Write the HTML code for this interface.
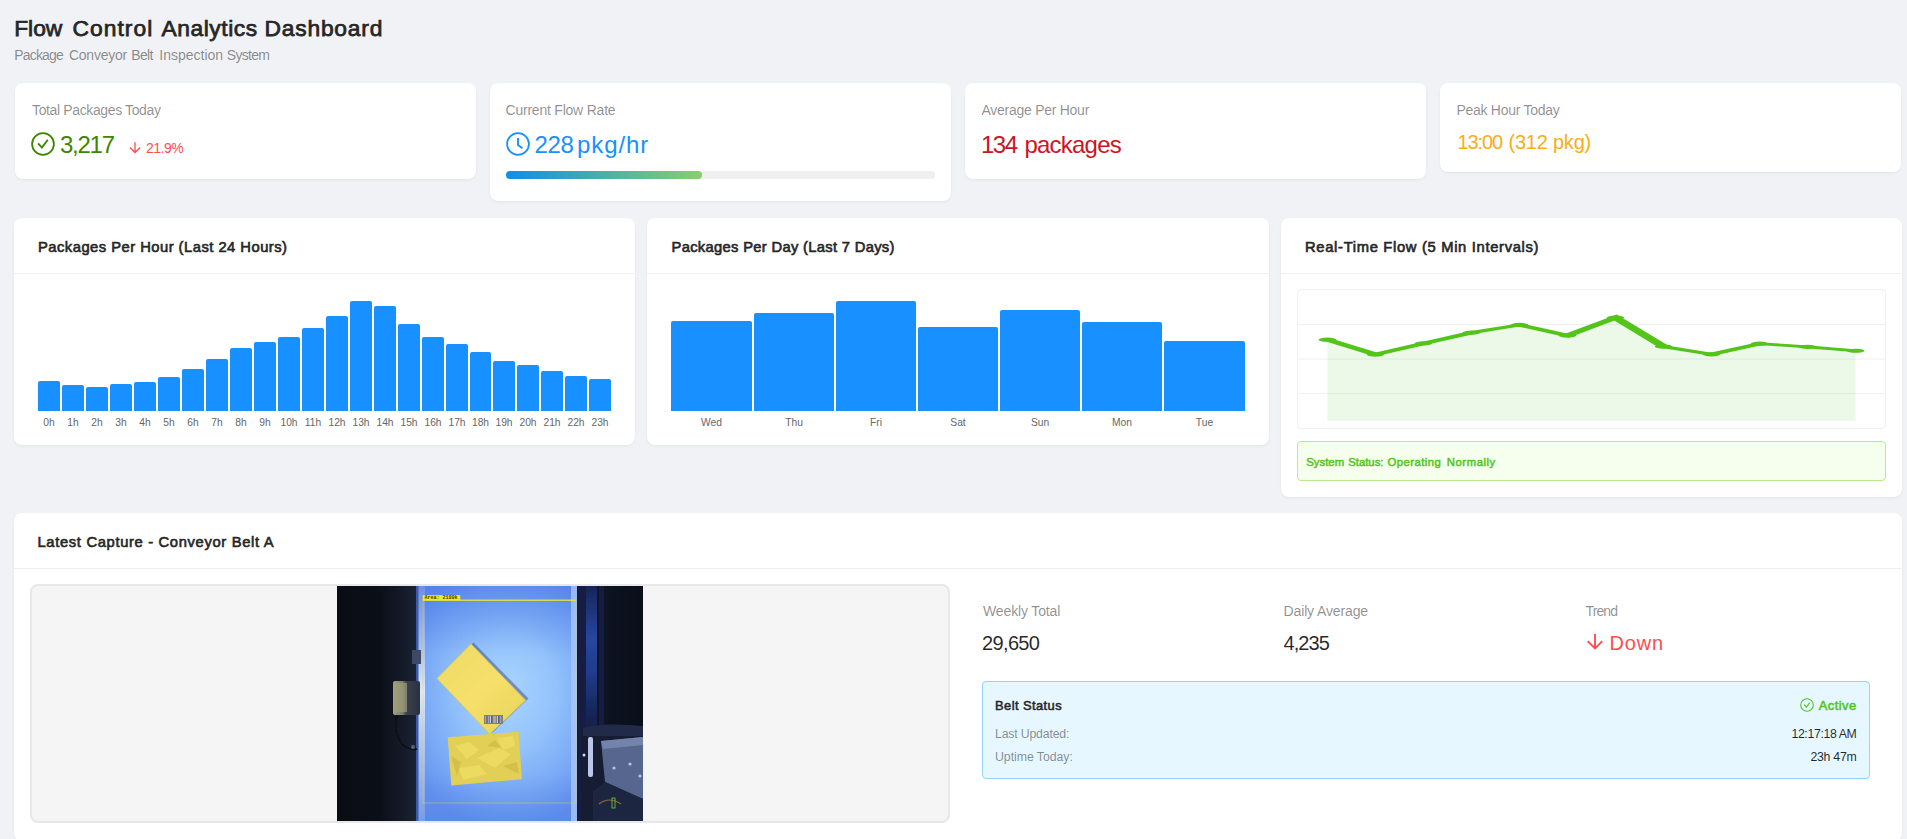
<!DOCTYPE html>
<html lang="en"><head><meta charset="utf-8"><title>Flow Control Analytics Dashboard</title>
<style>
html,body{margin:0;padding:0}
body{width:1907px;height:839px;overflow:hidden;background:#f0f2f5;position:relative;font-family:"Liberation Sans",sans-serif;}
.b{position:absolute;box-sizing:content-box}
.t{position:absolute;white-space:nowrap}
</style></head><body>
<span class="t" id="title0" style="top:12.00px;font-size:22.8px;line-height:32px;color:#262626;-webkit-text-stroke:0.75px;left:14.20px;">Flow</span>
<span class="t" id="title1" style="top:12.00px;font-size:22.8px;line-height:32px;color:#262626;-webkit-text-stroke:0.75px;letter-spacing:1.067px;left:72.40px;">Control</span>
<span class="t" id="title2" style="top:12.00px;font-size:22.8px;line-height:32px;color:#262626;-webkit-text-stroke:0.75px;letter-spacing:0.537px;left:161.60px;">Analytics</span>
<span class="t" id="title3" style="top:12.00px;font-size:22.8px;line-height:32px;color:#262626;-webkit-text-stroke:0.75px;letter-spacing:0.775px;left:264.60px;">Dashboard</span>
<span class="t" id="sub0" style="top:45.00px;font-size:14.0px;line-height:20px;color:rgba(0,0,0,.45);letter-spacing:-0.800px;left:14.20px;">Package</span>
<span class="t" id="sub1" style="top:45.00px;font-size:14.0px;line-height:20px;color:rgba(0,0,0,.45);letter-spacing:-0.229px;left:68.90px;">Conveyor</span>
<span class="t" id="sub2" style="top:45.00px;font-size:14.0px;line-height:20px;color:rgba(0,0,0,.45);letter-spacing:-0.633px;left:131.20px;">Belt</span>
<span class="t" id="sub3" style="top:45.00px;font-size:14.0px;line-height:20px;color:rgba(0,0,0,.45);left:159.30px;">Inspection</span>
<span class="t" id="sub4" style="top:45.00px;font-size:14.0px;line-height:20px;color:rgba(0,0,0,.45);letter-spacing:-0.700px;left:226.80px;">System</span>
<div class="b" style="left:15px;top:83px;width:461px;height:96px;background:#fff;border-radius:8px;box-shadow:0 1px 2px 0 rgba(0,0,0,.03),0 1px 6px -1px rgba(0,0,0,.02),0 2px 4px 0 rgba(0,0,0,.02);"></div>
<div class="b" style="left:490px;top:83px;width:461px;height:118px;background:#fff;border-radius:8px;box-shadow:0 1px 2px 0 rgba(0,0,0,.03),0 1px 6px -1px rgba(0,0,0,.02),0 2px 4px 0 rgba(0,0,0,.02);"></div>
<div class="b" style="left:965px;top:83px;width:461px;height:96px;background:#fff;border-radius:8px;box-shadow:0 1px 2px 0 rgba(0,0,0,.03),0 1px 6px -1px rgba(0,0,0,.02),0 2px 4px 0 rgba(0,0,0,.02);"></div>
<div class="b" style="left:1440px;top:83px;width:461px;height:89px;background:#fff;border-radius:8px;box-shadow:0 1px 2px 0 rgba(0,0,0,.03),0 1px 6px -1px rgba(0,0,0,.02),0 2px 4px 0 rgba(0,0,0,.02);"></div>
<span class="t" id="s1t" style="top:100.00px;font-size:14.0px;line-height:20px;color:rgba(0,0,0,.45);letter-spacing:-0.368px;left:32.00px;">Total Packages Today</span>
<span class="t" id="s1v" style="top:128.00px;font-size:24.0px;line-height:34px;color:#3f8600;letter-spacing:-1.250px;left:60.00px;">3,217</span>
<span class="t" id="s1p" style="top:138.00px;font-size:14.0px;line-height:20px;color:#ff4d4f;letter-spacing:-0.500px;left:146.00px;">21.9%</span>
<span class="t" id="s2t" style="top:100.00px;font-size:14.0px;line-height:20px;color:rgba(0,0,0,.45);letter-spacing:-0.219px;left:505.50px;">Current Flow Rate</span>
<span class="t" id="s2v" style="top:128.00px;font-size:24.0px;line-height:34px;color:#1890ff;letter-spacing:-0.400px;left:534.50px;">228</span>
<span class="t" id="s2u" style="top:128.00px;font-size:24.0px;line-height:34px;color:#1890ff;letter-spacing:0.900px;left:577.00px;">pkg/hr</span>
<span class="t" id="s3t" style="top:100.00px;font-size:14.0px;line-height:20px;color:rgba(0,0,0,.45);letter-spacing:-0.267px;left:981.50px;">Average Per Hour</span>
<span class="t" id="s3v" style="top:128.00px;font-size:24.0px;line-height:34px;color:#cf1322;letter-spacing:-1.500px;left:981.00px;">134</span>
<span class="t" id="s3u" style="top:128.00px;font-size:24.0px;line-height:34px;color:#cf1322;letter-spacing:-0.786px;left:1024.50px;">packages</span>
<span class="t" id="s4t" style="top:100.00px;font-size:14.0px;line-height:20px;color:rgba(0,0,0,.45);letter-spacing:-0.286px;left:1456.50px;">Peak Hour Today</span>
<span class="t" id="s4v" style="top:128.00px;font-size:20.0px;line-height:28px;color:#faad14;letter-spacing:-1.150px;left:1457.60px;">13:00</span>
<span class="t" id="s4w" style="top:128.00px;font-size:20.0px;line-height:28px;color:#faad14;letter-spacing:-0.225px;left:1508.50px;">(312 pkg)</span>
<svg class="b" style="left:31px;top:132px" width="24" height="24" viewBox="0 0 24 24" fill="none" stroke="#3f8600" stroke-width="1.8"><circle cx="12" cy="12" r="10.9"/><path d="M7.1 11.3L10.9 15.6L16.8 7.8" stroke-width="1.9"/></svg>
<svg class="b" style="left:128.3px;top:141.1px" width="14" height="14" viewBox="0 0 20 20" fill="none" stroke="#ff4d4f" stroke-width="1.9"><path d="M10 1.9V17M2.7 9.2L10 16.5L17.3 9.2"/></svg>
<svg class="b" style="left:506px;top:132px" width="24" height="24" viewBox="0 0 24 24" fill="none" stroke="#1890ff" stroke-width="1.8"><circle cx="12" cy="12" r="10.9"/><path d="M12 6V13.1L16.5 16.2" stroke-width="1.9"/></svg>
<div class="b" style="left:506px;top:171px;width:429px;height:8px;background:#f0f0f0;border-radius:4px;"><div style="width:196px;height:8px;border-radius:4px;background:linear-gradient(90deg,#108ee9,#87d068)"></div></div>
<div class="b" style="left:14px;top:218px;width:621px;height:227px;background:#fff;border-radius:8px;box-shadow:0 1px 2px 0 rgba(0,0,0,.03),0 1px 6px -1px rgba(0,0,0,.02),0 2px 4px 0 rgba(0,0,0,.02);"></div>
<div class="b" style="left:647px;top:218px;width:622px;height:227px;background:#fff;border-radius:8px;box-shadow:0 1px 2px 0 rgba(0,0,0,.03),0 1px 6px -1px rgba(0,0,0,.02),0 2px 4px 0 rgba(0,0,0,.02);"></div>
<div class="b" style="left:1281px;top:218px;width:621px;height:279px;background:#fff;border-radius:8px;box-shadow:0 1px 2px 0 rgba(0,0,0,.03),0 1px 6px -1px rgba(0,0,0,.02),0 2px 4px 0 rgba(0,0,0,.02);"></div>
<div class="b" style="left:14px;top:273px;width:621px;height:1px;background:#f0f0f0;"></div>
<div class="b" style="left:647px;top:273px;width:622px;height:1px;background:#f0f0f0;"></div>
<div class="b" style="left:1281px;top:273px;width:621px;height:1px;background:#f0f0f0;"></div>
<span class="t" id="c1" style="top:237.00px;font-size:14.74px;line-height:21px;color:#262626;-webkit-text-stroke:0.62px;letter-spacing:0.487px;left:38.00px;">Packages Per Hour (Last 24 Hours)</span>
<span class="t" id="c2" style="top:237.00px;font-size:14.74px;line-height:21px;color:#262626;-webkit-text-stroke:0.62px;letter-spacing:0.317px;left:671.50px;">Packages Per Day (Last 7 Days)</span>
<span class="t" id="c3" style="top:237.00px;font-size:14.74px;line-height:21px;color:#262626;-webkit-text-stroke:0.62px;letter-spacing:0.684px;left:1305.00px;">Real-Time Flow (5 Min Intervals)</span>
<div class="b" style="left:38px;top:381px;width:22px;height:30px;background:#1890ff;border-radius:2px 2px 0 0;"></div>
<span class="t" id="h0" style="top:416.00px;font-size:10.25px;line-height:14px;color:#666;left:49.00px;transform:translateX(-50%);">0h</span>
<div class="b" style="left:62px;top:385px;width:22px;height:26px;background:#1890ff;border-radius:2px 2px 0 0;"></div>
<span class="t" id="h1" style="top:416.00px;font-size:10.25px;line-height:14px;color:#666;left:73.00px;transform:translateX(-50%);">1h</span>
<div class="b" style="left:86px;top:387px;width:22px;height:24px;background:#1890ff;border-radius:2px 2px 0 0;"></div>
<span class="t" id="h2" style="top:416.00px;font-size:10.25px;line-height:14px;color:#666;left:97.00px;transform:translateX(-50%);">2h</span>
<div class="b" style="left:110px;top:384px;width:22px;height:27px;background:#1890ff;border-radius:2px 2px 0 0;"></div>
<span class="t" id="h3" style="top:416.00px;font-size:10.25px;line-height:14px;color:#666;left:121.00px;transform:translateX(-50%);">3h</span>
<div class="b" style="left:134px;top:382px;width:22px;height:29px;background:#1890ff;border-radius:2px 2px 0 0;"></div>
<span class="t" id="h4" style="top:416.00px;font-size:10.25px;line-height:14px;color:#666;left:145.00px;transform:translateX(-50%);">4h</span>
<div class="b" style="left:158px;top:377px;width:22px;height:34px;background:#1890ff;border-radius:2px 2px 0 0;"></div>
<span class="t" id="h5" style="top:416.00px;font-size:10.25px;line-height:14px;color:#666;left:169.00px;transform:translateX(-50%);">5h</span>
<div class="b" style="left:182px;top:369px;width:22px;height:42px;background:#1890ff;border-radius:2px 2px 0 0;"></div>
<span class="t" id="h6" style="top:416.00px;font-size:10.25px;line-height:14px;color:#666;left:193.00px;transform:translateX(-50%);">6h</span>
<div class="b" style="left:206px;top:359px;width:22px;height:52px;background:#1890ff;border-radius:2px 2px 0 0;"></div>
<span class="t" id="h7" style="top:416.00px;font-size:10.25px;line-height:14px;color:#666;left:217.00px;transform:translateX(-50%);">7h</span>
<div class="b" style="left:230px;top:348px;width:22px;height:63px;background:#1890ff;border-radius:2px 2px 0 0;"></div>
<span class="t" id="h8" style="top:416.00px;font-size:10.25px;line-height:14px;color:#666;left:241.00px;transform:translateX(-50%);">8h</span>
<div class="b" style="left:254px;top:342px;width:22px;height:69px;background:#1890ff;border-radius:2px 2px 0 0;"></div>
<span class="t" id="h9" style="top:416.00px;font-size:10.25px;line-height:14px;color:#666;left:265.00px;transform:translateX(-50%);">9h</span>
<div class="b" style="left:278px;top:337px;width:22px;height:74px;background:#1890ff;border-radius:2px 2px 0 0;"></div>
<span class="t" id="h10" style="top:416.00px;font-size:10.25px;line-height:14px;color:#666;left:289.00px;transform:translateX(-50%);">10h</span>
<div class="b" style="left:302px;top:328px;width:22px;height:83px;background:#1890ff;border-radius:2px 2px 0 0;"></div>
<span class="t" id="h11" style="top:416.00px;font-size:10.25px;line-height:14px;color:#666;left:313.00px;transform:translateX(-50%);">11h</span>
<div class="b" style="left:326px;top:316px;width:22px;height:95px;background:#1890ff;border-radius:2px 2px 0 0;"></div>
<span class="t" id="h12" style="top:416.00px;font-size:10.25px;line-height:14px;color:#666;left:337.00px;transform:translateX(-50%);">12h</span>
<div class="b" style="left:350px;top:301px;width:22px;height:110px;background:#1890ff;border-radius:2px 2px 0 0;"></div>
<span class="t" id="h13" style="top:416.00px;font-size:10.25px;line-height:14px;color:#666;left:361.00px;transform:translateX(-50%);">13h</span>
<div class="b" style="left:374px;top:306px;width:22px;height:105px;background:#1890ff;border-radius:2px 2px 0 0;"></div>
<span class="t" id="h14" style="top:416.00px;font-size:10.25px;line-height:14px;color:#666;left:385.00px;transform:translateX(-50%);">14h</span>
<div class="b" style="left:398px;top:324px;width:22px;height:87px;background:#1890ff;border-radius:2px 2px 0 0;"></div>
<span class="t" id="h15" style="top:416.00px;font-size:10.25px;line-height:14px;color:#666;left:409.00px;transform:translateX(-50%);">15h</span>
<div class="b" style="left:422px;top:337px;width:22px;height:74px;background:#1890ff;border-radius:2px 2px 0 0;"></div>
<span class="t" id="h16" style="top:416.00px;font-size:10.25px;line-height:14px;color:#666;left:433.00px;transform:translateX(-50%);">16h</span>
<div class="b" style="left:446px;top:344px;width:22px;height:67px;background:#1890ff;border-radius:2px 2px 0 0;"></div>
<span class="t" id="h17" style="top:416.00px;font-size:10.25px;line-height:14px;color:#666;left:457.00px;transform:translateX(-50%);">17h</span>
<div class="b" style="left:470px;top:352px;width:21px;height:59px;background:#1890ff;border-radius:2px 2px 0 0;"></div>
<span class="t" id="h18" style="top:416.00px;font-size:10.25px;line-height:14px;color:#666;left:480.50px;transform:translateX(-50%);">18h</span>
<div class="b" style="left:493px;top:361px;width:22px;height:50px;background:#1890ff;border-radius:2px 2px 0 0;"></div>
<span class="t" id="h19" style="top:416.00px;font-size:10.25px;line-height:14px;color:#666;left:504.00px;transform:translateX(-50%);">19h</span>
<div class="b" style="left:517px;top:365px;width:22px;height:46px;background:#1890ff;border-radius:2px 2px 0 0;"></div>
<span class="t" id="h20" style="top:416.00px;font-size:10.25px;line-height:14px;color:#666;left:528.00px;transform:translateX(-50%);">20h</span>
<div class="b" style="left:541px;top:371px;width:22px;height:40px;background:#1890ff;border-radius:2px 2px 0 0;"></div>
<span class="t" id="h21" style="top:416.00px;font-size:10.25px;line-height:14px;color:#666;left:552.00px;transform:translateX(-50%);">21h</span>
<div class="b" style="left:565px;top:376px;width:22px;height:35px;background:#1890ff;border-radius:2px 2px 0 0;"></div>
<span class="t" id="h22" style="top:416.00px;font-size:10.25px;line-height:14px;color:#666;left:576.00px;transform:translateX(-50%);">22h</span>
<div class="b" style="left:589px;top:379px;width:22px;height:32px;background:#1890ff;border-radius:2px 2px 0 0;"></div>
<span class="t" id="h23" style="top:416.00px;font-size:10.25px;line-height:14px;color:#666;left:600.00px;transform:translateX(-50%);">23h</span>
<div class="b" style="left:671px;top:321px;width:81px;height:90px;background:#1890ff;border-radius:2px 2px 0 0;"></div>
<span class="t" id="d0" style="top:416.00px;font-size:10.25px;line-height:14px;color:#666;left:711.50px;transform:translateX(-50%);">Wed</span>
<div class="b" style="left:754px;top:313px;width:80px;height:98px;background:#1890ff;border-radius:2px 2px 0 0;"></div>
<span class="t" id="d1" style="top:416.00px;font-size:10.25px;line-height:14px;color:#666;left:794.00px;transform:translateX(-50%);">Thu</span>
<div class="b" style="left:836px;top:301px;width:80px;height:110px;background:#1890ff;border-radius:2px 2px 0 0;"></div>
<span class="t" id="d2" style="top:416.00px;font-size:10.25px;line-height:14px;color:#666;left:876.00px;transform:translateX(-50%);">Fri</span>
<div class="b" style="left:918px;top:327px;width:80px;height:84px;background:#1890ff;border-radius:2px 2px 0 0;"></div>
<span class="t" id="d3" style="top:416.00px;font-size:10.25px;line-height:14px;color:#666;left:958.00px;transform:translateX(-50%);">Sat</span>
<div class="b" style="left:1000px;top:310px;width:80px;height:101px;background:#1890ff;border-radius:2px 2px 0 0;"></div>
<span class="t" id="d4" style="top:416.00px;font-size:10.25px;line-height:14px;color:#666;left:1040.00px;transform:translateX(-50%);">Sun</span>
<div class="b" style="left:1082px;top:322px;width:80px;height:89px;background:#1890ff;border-radius:2px 2px 0 0;"></div>
<span class="t" id="d5" style="top:416.00px;font-size:10.25px;line-height:14px;color:#666;left:1122.00px;transform:translateX(-50%);">Mon</span>
<div class="b" style="left:1164px;top:341px;width:81px;height:70px;background:#1890ff;border-radius:2px 2px 0 0;"></div>
<span class="t" id="d6" style="top:416.00px;font-size:10.25px;line-height:14px;color:#666;left:1204.50px;transform:translateX(-50%);">Tue</span>
<div class="b" style="left:1297px;top:289px;width:587px;height:138px;border:1px solid #f0f0f0;border-radius:4px;overflow:hidden;"><svg width="587" height="138" viewBox="0 0 100 100" preserveAspectRatio="none" style="display:block">
<line x1="0" y1="25" x2="100" y2="25" stroke="#f0f0f0" stroke-width="1" vector-effect="non-scaling-stroke"/>
<line x1="0" y1="50" x2="100" y2="50" stroke="#f0f0f0" stroke-width="1" vector-effect="non-scaling-stroke"/>
<line x1="0" y1="75" x2="100" y2="75" stroke="#f0f0f0" stroke-width="1" vector-effect="non-scaling-stroke"/>
<polygon points="5,95 5.00,36.00 13.18,46.70 21.36,38.70 29.55,30.90 37.73,25.30 45.91,33.00 54.09,20.00 62.27,41.00 70.45,46.60 78.64,38.90 86.82,41.20 95.00,44.00 95,95" fill="rgba(82,196,26,0.1)"/>
<polyline points="5.00,36.00 13.18,46.70 21.36,38.70 29.55,30.90 37.73,25.30 45.91,33.00 54.09,20.00 62.27,41.00 70.45,46.60 78.64,38.90 86.82,41.20 95.00,44.00" fill="none" stroke="#52c41a" stroke-width="2"/>
<circle cx="5.00" cy="36.00" r="1.5" fill="#52c41a"/><circle cx="13.18" cy="46.70" r="1.5" fill="#52c41a"/><circle cx="21.36" cy="38.70" r="1.5" fill="#52c41a"/><circle cx="29.55" cy="30.90" r="1.5" fill="#52c41a"/><circle cx="37.73" cy="25.30" r="1.5" fill="#52c41a"/><circle cx="45.91" cy="33.00" r="1.5" fill="#52c41a"/><circle cx="54.09" cy="20.00" r="1.5" fill="#52c41a"/><circle cx="62.27" cy="41.00" r="1.5" fill="#52c41a"/><circle cx="70.45" cy="46.60" r="1.5" fill="#52c41a"/><circle cx="78.64" cy="38.90" r="1.5" fill="#52c41a"/><circle cx="86.82" cy="41.20" r="1.5" fill="#52c41a"/><circle cx="95.00" cy="44.00" r="1.5" fill="#52c41a"/></svg></div>
<div class="b" style="left:1297px;top:441px;width:587px;height:38px;border:1px solid #b7eb8f;border-radius:4px;background:#f6ffed;"></div>
<span class="t" id="sys0" style="top:454.00px;font-size:11.33px;line-height:16px;color:#52c41a;-webkit-text-stroke:0.48px;left:1306.30px;">System</span>
<span class="t" id="sys1" style="top:454.00px;font-size:11.33px;line-height:16px;color:#52c41a;-webkit-text-stroke:0.48px;left:1348.20px;">Status:</span>
<span class="t" id="sys2" style="top:454.00px;font-size:11.33px;line-height:16px;color:#52c41a;-webkit-text-stroke:0.48px;letter-spacing:0.438px;left:1387.60px;">Operating</span>
<span class="t" id="sys3" style="top:454.00px;font-size:11.33px;line-height:16px;color:#52c41a;-webkit-text-stroke:0.48px;letter-spacing:0.543px;left:1446.80px;">Normally</span>
<div class="b" style="left:14px;top:513px;width:1888px;height:328px;background:#fff;border-radius:8px;box-shadow:0 1px 2px 0 rgba(0,0,0,.03),0 1px 6px -1px rgba(0,0,0,.02),0 2px 4px 0 rgba(0,0,0,.02);"></div>
<div class="b" style="left:14px;top:568px;width:1888px;height:1px;background:#f0f0f0;"></div>
<span class="t" id="c4" style="top:532.00px;font-size:14.74px;line-height:21px;color:#262626;-webkit-text-stroke:0.62px;letter-spacing:0.665px;left:37.50px;">Latest Capture - Conveyor Belt A</span>
<div class="b" style="left:30px;top:584px;width:916px;height:235px;border:2px solid #e8e8e8;border-radius:8px;background:#f5f5f5;"></div>
<svg class="b" style="left:337px;top:586px" width="306" height="235" viewBox="0 0 306 235">
<defs>
<linearGradient id="cbg" x1="0" x2="1" y1="0" y2="0"><stop offset="0" stop-color="#090c13"/><stop offset=".14" stop-color="#0b0f18"/><stop offset=".22" stop-color="#151b29"/><stop offset=".27" stop-color="#1d2538"/><stop offset=".79" stop-color="#131a2e"/><stop offset=".9" stop-color="#0d1220"/><stop offset="1" stop-color="#0a0e19"/></linearGradient>
<radialGradient id="belt" cx="170" cy="105" r="140" gradientUnits="userSpaceOnUse" gradientTransform="translate(170 105) scale(.8 1) translate(-170 -105)"><stop offset="0" stop-color="#a8d4ff"/><stop offset=".4" stop-color="#95c4fc"/><stop offset=".75" stop-color="#7aa9f6"/><stop offset="1" stop-color="#6392ef"/></radialGradient>
<linearGradient id="beltv" x1="0" x2="0" y1="0" y2="1"><stop offset="0" stop-color="#4272e4" stop-opacity=".5"/><stop offset=".3" stop-color="#4272e4" stop-opacity="0"/><stop offset=".8" stop-color="#4a78e0" stop-opacity="0"/><stop offset="1" stop-color="#4a78e0" stop-opacity=".35"/></linearGradient>
<linearGradient id="ledge" x1="0" x2="0" y1="0" y2="1"><stop offset="0" stop-color="#6f93e0"/><stop offset=".3" stop-color="#b9cdf5"/><stop offset=".45" stop-color="#eef3ff"/><stop offset=".6" stop-color="#c9d9f8"/><stop offset="1" stop-color="#7c9fe6"/></linearGradient>
<linearGradient id="streak" x1="0" x2="0" y1="0" y2="1"><stop offset="0" stop-color="#16245a"/><stop offset=".35" stop-color="#2747a0"/><stop offset=".6" stop-color="#1f3a88"/><stop offset="1" stop-color="#101a3c"/></linearGradient>
<linearGradient id="y1" x1="0" x2="1" y1="0" y2="1"><stop offset="0" stop-color="#e9dc62"/><stop offset=".5" stop-color="#f7df6c"/><stop offset="1" stop-color="#e6d458"/></linearGradient>
<linearGradient id="sens" x1="0" x2="1" y1="0" y2="0"><stop offset="0" stop-color="#a3a37c"/><stop offset=".35" stop-color="#7d7f68"/><stop offset=".5" stop-color="#3a404c"/><stop offset="1" stop-color="#2a3140"/></linearGradient>
<filter id="cbl" x="-5%" y="-5%" width="110%" height="110%"><feGaussianBlur stdDeviation=".7"/></filter>
<clipPath id="cclip"><rect width="306" height="235"/></clipPath>
</defs>
<g clip-path="url(#cclip)">
<rect width="306" height="235" fill="url(#cbg)"/>
<g filter="url(#cbl)">
<!-- right side rails -->
<rect x="241" y="0" width="9" height="235" fill="#151f42"/>
<rect x="249" y="0" width="11" height="150" fill="url(#streak)"/>
<rect x="262" y="0" width="5" height="140" fill="#131d45"/>
<!-- belt -->
<rect x="81" y="0" width="159" height="235" fill="url(#belt)"/>
<rect x="81" y="0" width="159" height="235" fill="url(#beltv)"/>
<rect x="81" y="0" width="7" height="235" fill="url(#ledge)" opacity=".85"/>
<rect x="234" y="0" width="6" height="235" fill="#a9c4f6" opacity=".8"/>
<rect x="79" y="0" width="2.5" height="235" fill="#3c5aa8"/>
<!-- sensor on left -->
<rect x="75" y="64" width="9" height="14" fill="#3c4866"/>
<rect x="56" y="95" width="27" height="34" rx="2" fill="url(#sens)"/>
<rect x="58" y="97" width="12" height="29" fill="#9c9c78" opacity=".7"/>
<path d="M60 129 q-4 18 6 30 q8 6 14 4" fill="none" stroke="#0a0d15" stroke-width="1.5"/>
<circle cx="76" cy="161" r="2" fill="#56627e"/>
<!-- machinery bottom-right -->
<path d="M244 142 h62 v93 h-62 z" fill="#141b30"/>
<path d="M246 142 q20 -6 60 -2 v10 h-60 z" fill="#222c48"/>
<rect x="251" y="151" width="5" height="40" rx="2" fill="#b9c8ea"/>
<path d="M264 155 l42 -4 v62 l-38 -17 z" fill="#56668f"/>
<path d="M264 155 l42 -4 v8 l-40 4 z" fill="#7383ab"/>
<path d="M268 196 l38 17 v22 h-50 v-30 z" fill="#1d2740"/>
<circle cx="277" cy="182" r="1.6" fill="#b8c4e4"/><circle cx="293" cy="178" r="1.6" fill="#b8c4e4"/><circle cx="303" cy="190" r="1.6" fill="#b8c4e4"/>
<circle cx="247" cy="169" r="1.5" fill="#cdd6ee"/>
<path d="M262 218 q10 -8 22 0" stroke="#8a6a30" stroke-width="1.2" fill="none"/>
<rect x="275" y="212" width="3" height="10" fill="none" stroke="#7cc83a" stroke-width=".8"/>
<!-- packages -->
<path d="M134 58 L189 114 L153 148 L100 92.5 Z" fill="#2b3f7a" opacity=".45" transform="translate(2.5 -1.5)"/>
<path d="M134 58 L188.6 114.3 L152.7 148 L100 92.5 Z" fill="url(#y1)" stroke="#d9c850" stroke-width=".8" stroke-linejoin="round"/>
<path d="M110.7 151.3 L181.6 145.7 L184.9 193.3 L114.3 199.5 Z" fill="#e2cf55"/>
<path d="M118 160 l14 -4 l10 8 l-12 9 z M140 172 l22 -10 l12 6 l-16 14 z M122 182 l20 -3 l8 9 l-24 6 z M160 152 l16 -2 l2 10 l-12 4 z" fill="#f0de66" opacity=".75"/>
<path d="M114 170 l10 6 l-4 14 z M150 160 l8 -6 l6 8 z M166 180 l14 -4 l2 12 z" fill="#cdb947" opacity=".7"/>
<!-- barcode -->
<rect x="147" y="129" width="19" height="9" fill="#7d7f86"/>
<path d="M149 130v7M151 130v7M153.5 130v7M156 130v7M158 130v7M160.5 130v7M163 130v7" stroke="#d8dae0" stroke-width=".9"/>
<path d="M150 130v7M155 130v7M162 130v7" stroke="#2a2c33" stroke-width=".8"/>
</g>
<!-- detection overlay -->
<rect x="86" y="14" width="153" height="203" fill="none" stroke="#e9d84e" stroke-width=".6" opacity=".75"/>
<path d="M86 14.2H239" stroke="#f3ea2c" stroke-width="1.1"/>
<rect x="85.7" y="9.2" width="37.6" height="5" fill="#f2ee14"/>
<text x="87.5" y="13.3" font-family="Liberation Mono, monospace" font-size="4.6" font-weight="700" fill="#3a3a10" textLength="33" lengthAdjust="spacingAndGlyphs">Area: 2180k</text>
</g>
</svg>

<span class="t" id="w1" style="top:601.00px;font-size:14.0px;line-height:20px;color:rgba(0,0,0,.45);letter-spacing:-0.136px;left:983.00px;">Weekly Total</span>
<span class="t" id="w2" style="top:629.00px;font-size:20.0px;line-height:28px;color:rgba(0,0,0,.85);letter-spacing:-0.640px;left:982.00px;">29,650</span>
<span class="t" id="w3" style="top:601.00px;font-size:14.0px;line-height:20px;color:rgba(0,0,0,.45);letter-spacing:-0.125px;left:1283.50px;">Daily Average</span>
<span class="t" id="w4" style="top:629.00px;font-size:20.0px;line-height:28px;color:rgba(0,0,0,.85);letter-spacing:-0.950px;left:1283.50px;">4,235</span>
<span class="t" id="w5" style="top:601.00px;font-size:14.0px;line-height:20px;color:rgba(0,0,0,.45);letter-spacing:-0.875px;left:1585.50px;">Trend</span>
<span class="t" id="w6" style="top:629.00px;font-size:20.0px;line-height:28px;color:#ff4d4f;letter-spacing:0.800px;left:1609.50px;">Down</span>
<svg class="b" style="left:1585px;top:632px" width="20" height="20" viewBox="0 0 20 20" fill="none" stroke="#ff4d4f" stroke-width="1.9"><path d="M10 1.9V17M2.7 9.2L10 16.5L17.3 9.2"/></svg>
<div class="b" style="left:982px;top:681px;width:886px;height:96px;border:1px solid #91d5ff;border-radius:4px;background:#e6f7ff;"></div>
<span class="t" id="b1" style="top:697.00px;font-size:12.89px;line-height:18px;color:#262626;-webkit-text-stroke:0.54px;letter-spacing:0.440px;left:995.00px;">Belt Status</span>
<span class="t" id="b2" style="top:697.00px;font-size:12.89px;line-height:18px;color:#52c41a;-webkit-text-stroke:0.54px;letter-spacing:0.440px;right:50.50px;">Active</span>
<svg class="b" style="left:1800px;top:698px" width="14" height="14" viewBox="0 0 14 14" fill="none" stroke="#52c41a" stroke-width="1.1"><circle cx="7" cy="7" r="6.3"/><path d="M4.15 6.6L6.35 9.1L9.8 4.55"/></svg>
<span class="t" id="b3" style="top:726.00px;font-size:12.3px;line-height:17px;color:rgba(0,0,0,.45);letter-spacing:-0.183px;left:995.00px;">Last Updated:</span>
<span class="t" id="b4" style="top:726.00px;font-size:12.3px;line-height:17px;color:rgba(0,0,0,.85);letter-spacing:-0.360px;right:50.50px;">12:17:18 AM</span>
<span class="t" id="b5" style="top:749.00px;font-size:12.3px;line-height:17px;color:rgba(0,0,0,.45);letter-spacing:-0.042px;left:995.00px;">Uptime Today:</span>
<span class="t" id="b6" style="top:749.00px;font-size:12.3px;line-height:17px;color:rgba(0,0,0,.85);letter-spacing:-0.250px;right:50.50px;">23h 47m</span>
</body></html>
